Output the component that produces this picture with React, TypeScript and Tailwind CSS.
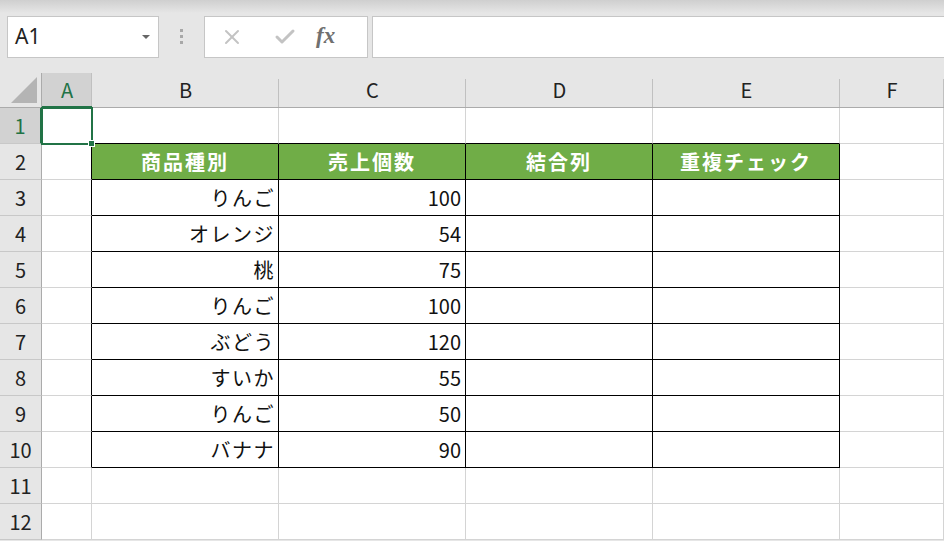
import { X, Check } from 'lucide-react';

const cols = ['A', 'B', 'C', 'D', 'E', 'F'];

const rows: { name: string; qty: string }[] = [
  { name: 'りんご', qty: '100' },
  { name: 'オレンジ', qty: '54' },
  { name: '桃', qty: '75' },
  { name: 'りんご', qty: '100' },
  { name: 'ぶどう', qty: '120' },
  { name: 'すいか', qty: '55' },
  { name: 'りんご', qty: '50' },
  { name: 'バナナ', qty: '90' },
];

const headers = ['商品種別', '売上個数', '結合列', '重複チェック'];

const cellFont = { fontFamily: '"Noto Sans CJK JP", "Noto Sans", sans-serif' };

// which cells sit inside the bordered table (B2:E10)
const inTable = (r: number, c: number) => r >= 2 && r <= 10 && c >= 1 && c <= 4;

const Cell = ({ r, c }: { r: number; c: number }) => {
  const table = inTable(r, c);
  const rightBlack = table || (c === 0 && r >= 2 && r <= 10);
  const bottomBlack = table || (r === 1 && c >= 1 && c <= 4);
  const isHeader = r === 2 && c >= 1 && c <= 4;

  let content: string | null = null;
  let align = 'justify-end';
  let extra = '';
  if (isHeader) {
    content = headers[c - 1];
    align = 'justify-center';
  } else if (r >= 3 && r <= 10) {
    if (c === 1) {
      content = rows[r - 3].name;
      extra = 'tracking-[1.5px] pr-[3px]';
    }
    if (c === 2) content = rows[r - 3].qty;
  }

  return (
    <div
      className={`relative flex items-center ${align} px-[4px] border-r border-b ${
        rightBlack ? 'border-r-black' : 'border-r-[#d4d4d4]'
      } ${bottomBlack ? 'border-b-black' : 'border-b-[#d4d4d4]'} ${
        isHeader ? 'bg-[#70ad47] text-white font-bold tracking-[2px]' : 'bg-white text-[#111]'
      } text-[20px] leading-none ${extra}`}
      style={cellFont}
    >
      {content}
      {r === 1 && c === 0 && (
        <>
          <div className="absolute -left-px -top-px w-[52px] h-[38px] border-2 border-[#217346] z-10 pointer-events-none" />
          <div className="absolute -right-[4px] -bottom-[4px] w-[7px] h-[7px] bg-[#217346] border border-white z-20" />
        </>
      )}
    </div>
  );
};

export default function App() {
  return (
    <div className="w-[944px] h-[541px] overflow-hidden bg-[#e6e6e6] flex flex-col">
      <div className="h-[13px] bg-gradient-to-b from-[#cfcfcf] to-[#e6e6e6]" />
      <div className="flex items-center h-[44px] pt-[3px]">
        <div className="ml-[7px] w-[152px] h-[42px] bg-white border border-[#c6c6c6] flex items-center justify-between pl-[7px] pr-[8px]">
          <span className="text-[21px] text-[#222]" style={{ fontFamily: '"Noto Sans", sans-serif' }}>
            A1
          </span>
          <span className="w-0 h-0 border-l-[4px] border-r-[4px] border-t-[4px] border-l-transparent border-r-transparent border-t-[#666]" />
        </div>
        <div className="w-[45px] flex flex-col items-center gap-[3px]">
          <span className="w-[3px] h-[3px] bg-[#a8a8a8]" />
          <span className="w-[3px] h-[3px] bg-[#a8a8a8]" />
          <span className="w-[3px] h-[3px] bg-[#a8a8a8]" />
        </div>
        <div className="w-[164px] h-[42px] bg-white border border-[#c6c6c6] flex items-center">
          <X className="ml-[15px] w-[24px] h-[24px] text-[#c3c3c3]" strokeWidth={2} />
          <Check className="ml-[29px] w-[24px] h-[24px] text-[#c3c3c3]" strokeWidth={3} />
          <span
            className="ml-[19px] text-[23px] italic font-bold text-[#707070]"
            style={{ fontFamily: '"Liberation Serif", serif' }}
          >
            fx
          </span>
        </div>
        <div className="ml-[4px] flex-1 h-[42px] bg-white border border-[#c6c6c6] border-r-0" />
      </div>
      <div className="h-[16px]" />
      <div
        className="grid flex-1 grid-cols-[42px_50px_187px_187px_187px_187px_1fr] grid-rows-[35px_repeat(12,36px)]"
        style={cellFont}
      >
        <div className="relative bg-[#e6e6e6] border-r border-b border-[#ababab]">
          <div className="absolute right-[4px] bottom-[4px] w-0 h-0 [border-bottom:26px_solid_#b4b4b4] [border-left:26px_solid_transparent]" />
        </div>
        {cols.map((c, i) => (
          <div
            key={c}
            className={`relative flex items-center justify-center text-[20px] border-b ${
              i === 0 ? 'bg-[#d2d2d2] text-[#217346] border-b-[#217346] border-b-2' : 'text-[#222] border-b-[#ababab]'
            }`}
          >
            {c}
            <span className={`absolute right-0 bottom-0 w-px ${i === 0 ? 'h-full bg-[#c0c0c0]' : 'h-[28px] bg-[#c0c0c0]'}`} />
          </div>
        ))}
        {Array.from({ length: 12 }, (_, ri) => {
          const r = ri + 1;
          return [
            <div
              key={`h${r}`}
              className={`flex items-center justify-center text-[20px] border-b border-b-[#c8c8c8] ${
                r === 1
                  ? 'bg-[#d2d2d2] text-[#217346] border-r-2 border-r-[#217346]'
                  : 'bg-[#e6e6e6] text-[#222] border-r border-r-[#ababab]'
              }`}
            >
              {r}
            </div>,
            ...cols.map((_, c) => <Cell key={`${r}-${c}`} r={r} c={c} />),
          ];
        })}
      </div>
    </div>
  );
}
